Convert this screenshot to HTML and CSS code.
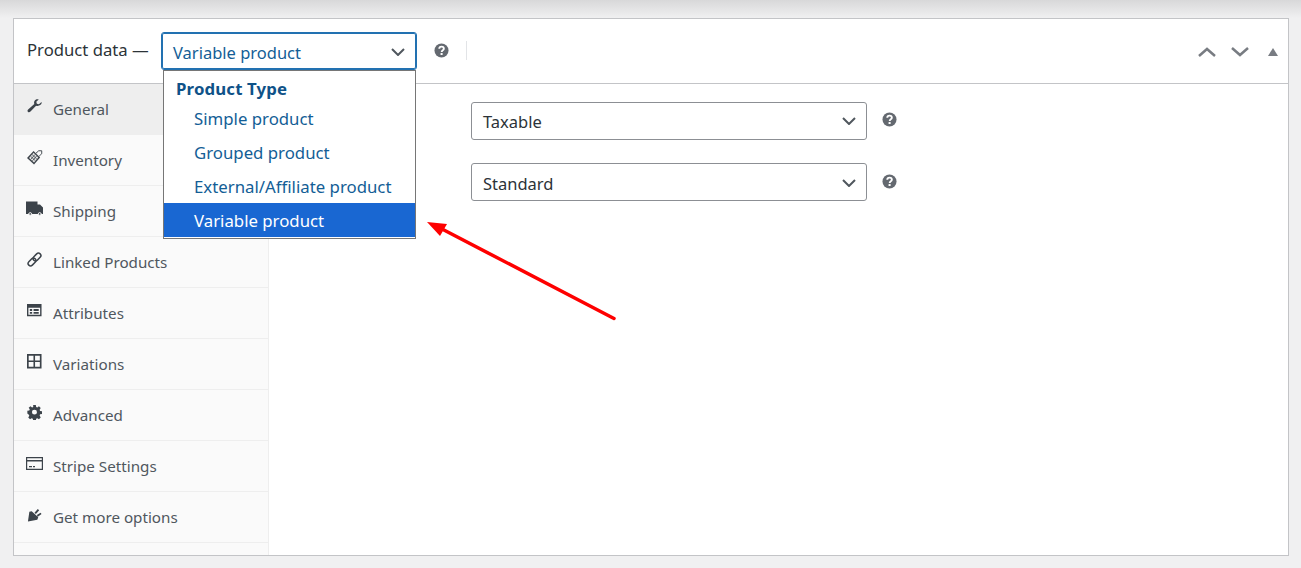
FILE: index.html
```html
<!DOCTYPE html>
<html lang="en">
<head>
<meta charset="utf-8">
<title>Product data</title>
<link rel="stylesheet" href="styles.css">
</head>
<body>
<section class="panel">
  <header class="head">
    <span class="head-title">Product data —</span>
    <div class="select select-focus">
      <span>Variable product</span>
      <svg class="chev" viewBox="0 0 14 8"><path d="M1 1l6 6 6-6"/></svg>
    </div>
    <svg class="help help-head" viewBox="0 0 16 16"><circle cx="8" cy="8" r="7.5"/><path class="q" d="M5.6 6.2c0-1.500 1.100-2.300 2.500-2.300s2.400.8 2.400 2.100c0 1.800-2.300 1.700-2.300 3.500"/><rect class="qd" x="7" y="10.700" width="2.200" height="2.100"/></svg>
    <span class="head-sep"></span>
    <div class="head-actions">
      <svg class="act act-up" viewBox="0 0 18 10"><path d="M1 9l8-7 8 7"/></svg>
      <svg class="act act-down" viewBox="0 0 18 10"><path d="M1 1l8 7 8-7"/></svg>
      <svg class="act-tri" viewBox="0 0 10 8"><path d="M5 0l5 8H0z"/></svg>
    </div>
  </header>

  <div class="menu">
    <div class="menu-group">Product Type</div>
    <div class="menu-item">Simple product</div>
    <div class="menu-item">Grouped product</div>
    <div class="menu-item">External/Affiliate product</div>
    <div class="menu-item menu-item-on">Variable product</div>
  </div>

  <div class="body">
    <nav class="side">
      <a class="tab tab-on"><svg class="ico" viewBox="0 0 16 16"><path d="M15.500 3.200l-2.800 2.500-2.200-.6-.6-2.100L12.500.5C10.700-.1 8.800.4 8 2c-.6 1-.6 2.300-.2 3.200L1.500 10.800c-1 .9-1.300 1.800-.6 2.700s1.900.8 2.800-.1l6-6.200c1 .4 2.200.4 3.200-.2 1.700-.9 3.100-2 2.600-3.800z"/></svg><span>General</span></a>
      <a class="tab"><svg class="ico ico-wide" viewBox="0 0 17 16"><path d="M7.500 1l7 7-6.500 7.500-7.500-7z"/><path class="inv-face" d="M7.500 3l5 5-4.500 5.200-5.300-4.700z"/><path class="inv-grid" d="M5.900 4.830L11 9.730M4.300 6.670L9.500 11.470M9.170 4.670L4.470 10.070M10.830 6.330L6.230 11.630"/><path class="stroke-thin" d="M10 3.500L13 .8h3.200V4L13.500 6.500"/></svg><span>Inventory</span></a>
      <a class="tab"><svg class="ico ico-wide" viewBox="0 0 17 14"><path d="M0 0h11.500v3h2.500l3 3v6.500h-1.300a2 2 0 0 0-3.900 0H6.200a2 2 0 0 0-3.900 0H0z"/><circle class="wheel" cx="4.200" cy="12.400" r="1.300"/><circle class="wheel" cx="13.700" cy="12.400" r="1.300"/></svg><span>Shipping</span></a>
      <a class="tab"><svg class="ico" viewBox="0 0 16 16"><g class="stroke-link" transform="rotate(-45 8 8)"><rect x="-.5" y="5.400" width="9.500" height="5.200" rx="2.600"/><rect x="7" y="5.400" width="9.500" height="5.200" rx="2.600"/></g></svg><span>Linked Products</span></a>
      <a class="tab"><svg class="ico" viewBox="0 0 16 14"><path fill-rule="evenodd" d="M0 0h15.500v13H0zM1.500 4v7.500h12.500V4z"/><path d="M3 5.500h2.500v2H3zM7 5.500h5.500v2H7zM3 8.500h2.500v2H3zM7 8.500h5.500v2H7z"/></svg><span>Attributes</span></a>
      <a class="tab"><svg class="ico" viewBox="0 0 16 16"><path fill-rule="evenodd" d="M0 0h15.500v15.500H0zM1.800 1.800v5.100h5.100V1.800zM8.600 1.800v5.100h5.100V1.800zM1.800 8.600v5.100h5.100V8.600zM8.600 8.600v5.100h5.100V8.600z"/></svg><span>Variations</span></a>
      <a class="tab"><svg class="ico" viewBox="0 0 16 16"><path fill-rule="evenodd" d="M6.500 0h3l.4 2.200 1.300.5L13 1.500l2 2-1.200 1.800.5 1.300 2.200.4v3l-2.200.4-.5 1.300L15 14l-2 2-1.800-1.200-1.300.5-.4 2.200h-3l-.4-2.200-1.300-.5L3 16l-2-2 1.200-1.800-.5-1.300L0 9.500v-3l2.200-.4.500-1.300L1.500 3l2-1.500 1.800 1.200 1.300-.5zM8 5.200a2.800 2.800 0 1 0 0 5.600 2.800 2.800 0 0 0 0-5.600z" transform="scale(.95) translate(.4 0)"/></svg><span>Advanced</span></a>
      <a class="tab"><svg class="ico ico-wide" viewBox="0 0 17 13"><path fill-rule="evenodd" d="M0 0h17v13H0zM1.200 1.200v1.800h14.600V1.200zM1.200 4.600v7.200h14.600V4.600z"/><path d="M3 9h3v1.200H3zM7 9h2v1.200H7z"/></svg><span>Stripe Settings</span></a>
      <a class="tab"><svg class="ico" viewBox="0 0 16 16"><path d="M1 15.500L2.500 5 5 4.500 12 11l-1 2.500zM8 6L11.500 2 13 3.500 9.500 7.500zM10.500 8.500L14.500 6l1 1.500-4 3z"/></svg><span>Get more options</span></a>
    </nav>
    <div class="fields">
      <div class="field">
        <div class="select select-up">
          <span>Taxable</span>
          <svg class="chev" viewBox="0 0 14 8"><path d="M1 1l6 6 6-6"/></svg>
        </div>
        <svg class="help" viewBox="0 0 16 16"><circle cx="8" cy="8" r="7.500"/><path class="q" d="M5.600 6.200c0-1.500 1.100-2.300 2.500-2.300s2.400.8 2.400 2.100c0 1.800-2.300 1.700-2.300 3.500"/><rect class="qd" x="7" y="10.700" width="2.200" height="2.100"/></svg>
      </div>
      <div class="field">
        <div class="select">
          <span>Standard</span>
          <svg class="chev" viewBox="0 0 14 8"><path d="M1 1l6 6 6-6"/></svg>
        </div>
        <svg class="help help-low" viewBox="0 0 16 16"><circle cx="8" cy="8" r="7.500"/><path class="q" d="M5.600 6.200c0-1.500 1.100-2.300 2.500-2.300s2.400.8 2.400 2.100c0 1.800-2.300 1.700-2.300 3.500"/><rect class="qd" x="7" y="10.700" width="2.200" height="2.100"/></svg>
      </div>
    </div>
  </div>
</section>

<svg class="arrow" viewBox="0 0 200 110"><path class="arrow-line" d="M187 96.500L15 7"/><path class="arrow-head" d="M0 0l20 2-7 12z"/></svg>
</body>
</html>
```

FILE: styles.css
```css
* { box-sizing: border-box; }

html, body { height: 100%; }

body {
  margin: 0;
  padding: 18px 12px 12px 13px;
  overflow: hidden;
  position: relative;
  background: linear-gradient(#d8d8d9 0, #f0f0f1 18px) #f0f0f1;
  font-family: "Noto Sans", "Open Sans", sans-serif;
  color: #3c434a;
}

.panel {
  position: relative;
  display: flex;
  flex-direction: column;
  width: 1276px;
  height: 538px;
  background: #fff;
  border: 1px solid #c3c4c7;
}

.head {
  display: flex;
  align-items: center;
  height: 65px;
  flex: none;
  padding-left: 13px;
  border-bottom: 1px solid #c3c4c7;
}

.head-title {
  width: 134px;
  margin-top: -3px;
  font-size: 16.7px;
  color: #2c3338;
}

.select {
  display: flex;
  align-items: center;
  justify-content: space-between;
  width: 396px;
  height: 38px;
  padding: 2px 10px 0 11px;
  background: #fff;
  border: 1px solid #8c8f94;
  border-radius: 3px;
  font-size: 16.5px;
  color: #2c3338;
}

.select-up { padding-top: 0; }

.select-focus {
  width: 256px;
  padding-right: 11px;
  border-color: #2271b1;
  box-shadow: 0 0 0 1px #2271b1 inset;
  color: #135e96;
}

.chev {
  width: 14px;
  height: 8px;
  flex: none;
  fill: none;
  stroke: #50575e;
  stroke-width: 2;
}

.help { width: 15px; height: 15px; flex: none; margin: -4px 0 0 15px; }
.help circle { fill: #646970; }
.help .q { fill: none; stroke: #fff; stroke-width: 2; }
.help .qd { fill: #fff; }
.help-head { margin: -2px 0 0 17px; }
.help-low { margin-top: -2px; }

.head-sep { width: 1px; height: 19px; margin: -2px 0 0 17px; background: #e2e4e7; }

.head-actions {
  display: flex;
  align-items: center;
  margin: 2px 0 0 auto;
  padding-right: 10px;
}

.act { width: 18px; height: 10px; fill: none; stroke: #787c82; stroke-width: 2.500; }
.act-down { margin-left: 15px; }
.act-tri { width: 10px; height: 8px; margin-left: 19px; fill: #787c82; }

.menu {
  position: absolute;
  left: 149px;
  top: 51px;
  width: 253px;
  height: 169px;
  background: #fff;
  border: 1px solid #767676;
  font-size: 16.8px;
  color: #135e96;
}

.menu-group { height: 30px; padding: 6px 0 0 12px; font-weight: 700; line-height: 24px; letter-spacing: 0.15px; color: #0f5288; }
.menu-item { height: 34px; padding-left: 30px; line-height: 36px; }
.menu-item-on { background: #1967d2; color: #fff; }

.body { flex: 1; display: flex; min-height: 0; }

.side {
  width: 255px;
  flex: none;
  background: #fafafa;
  border-right: 1px solid #eee;
  overflow: hidden;
}

.tab {
  display: flex;
  align-items: center;
  height: 51px;
  padding-left: 13px;
  border-bottom: 1px solid #eee;
  font-size: 15.2px;
  color: #50575e;
}

.tab span { margin-left: 11px; padding-bottom: 1px; }

.tab-on { background: #eee; }

.ico { width: 15px; height: 15px; flex: none; margin-top: -6px; fill: #3c434a; }
.ico-wide { width: 17px; margin-left: -1px; margin-right: -1px; }

.inv-face { fill: #e4e4e4; }
.inv-grid { fill: none; stroke: #3c434a; stroke-width: .8; }
.wheel { stroke: #fafafa; stroke-width: .8; }
.stroke-thin { fill: none; stroke: #3c434a; stroke-width: 1; }
.stroke-link { fill: none; stroke: #3c434a; stroke-width: 1.600; }

.fields {
  display: flex;
  flex-direction: column;
  gap: 23px;
  flex: 1;
  padding: 18px 0 0 202px;
}

.field { display: flex; align-items: center; }

.arrow {
  position: absolute;
  left: 427px;
  top: 222px;
  width: 200px;
  height: 110px;
}

.arrow-line { fill: none; stroke: #fe0000; stroke-width: 3.500; stroke-linecap: round; }
.arrow-head { fill: #fe0000; }
```
